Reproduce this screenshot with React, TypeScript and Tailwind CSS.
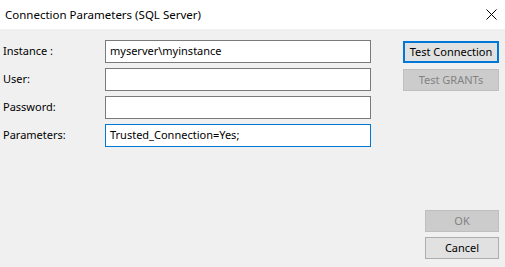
const FONT = "font-['Noto_Sans','Open_Sans',sans-serif]";

interface FieldRowProps {
  label: string;
  value?: string;
  focused?: boolean;
}

function FieldRow({ label, value = '', focused = false }: FieldRowProps) {
  return (
    <div className="flex items-center h-[23px]">
      <span className="w-[105px] pl-[3px] text-[11px] text-black">{label}</span>
      <div
        className={`w-[266px] h-[23px] bg-white flex items-center pl-[4px] text-[11px] text-black border ${
          focused ? 'border-[#0078d7]' : 'border-[#7a7a7a]'
        }`}
      >
        {value}
      </div>
    </div>
  );
}

function CloseIcon() {
  return (
    <svg width="11" height="11" viewBox="0 0 11 11" className="block">
      <path d="M0.5 0.5 L10.5 10.5 M10.5 0.5 L0.5 10.5" stroke="#000" strokeWidth="1" />
    </svg>
  );
}

export default function App() {
  return (
    <div className={`w-[505px] h-[267px] bg-[#f0f0f0] flex flex-col ${FONT}`}>
      <div className="h-[29px] bg-white flex items-center justify-between pl-[5px] pr-[8px]">
        <span className="text-[11.5px] text-black">Connection Parameters (SQL Server)</span>
        <CloseIcon />
      </div>

      <div className="flex flex-1 pt-[11px]">
        <div className="flex flex-col gap-[5px]">
          <FieldRow label="Instance :" value="myserver\myinstance" />
          <FieldRow label="User:" />
          <FieldRow label="Password:" />
          <FieldRow label="Parameters:" value="Trusted_Connection=Yes;" focused />
        </div>

        <div className="flex-1 flex flex-col items-end pr-[6px]">
          <div className="flex flex-col gap-[6px] pt-[1px]">
            <button className="w-[96px] h-[22px] bg-[#e1e1e1] border-2 border-[#0078d7] text-[11px] text-black flex items-center justify-center">
              Test Connection
            </button>
            <button
              disabled
              className="w-[96px] h-[22px] bg-[#cccccc] border border-[#bfbfbf] text-[11px] text-[#838383] flex items-center justify-center"
            >
              Test GRANTs
            </button>
          </div>
          <div className="mt-auto mb-[8px] flex flex-col gap-[5px]">
            <button
              disabled
              className="w-[74px] h-[22px] bg-[#cccccc] border border-[#bfbfbf] text-[11px] text-[#838383] flex items-center justify-center"
            >
              OK
            </button>
            <button className="w-[74px] h-[22px] bg-[#e1e1e1] border border-[#adadad] text-[11px] text-black flex items-center justify-center">
              Cancel
            </button>
          </div>
        </div>
      </div>
    </div>
  );
}
